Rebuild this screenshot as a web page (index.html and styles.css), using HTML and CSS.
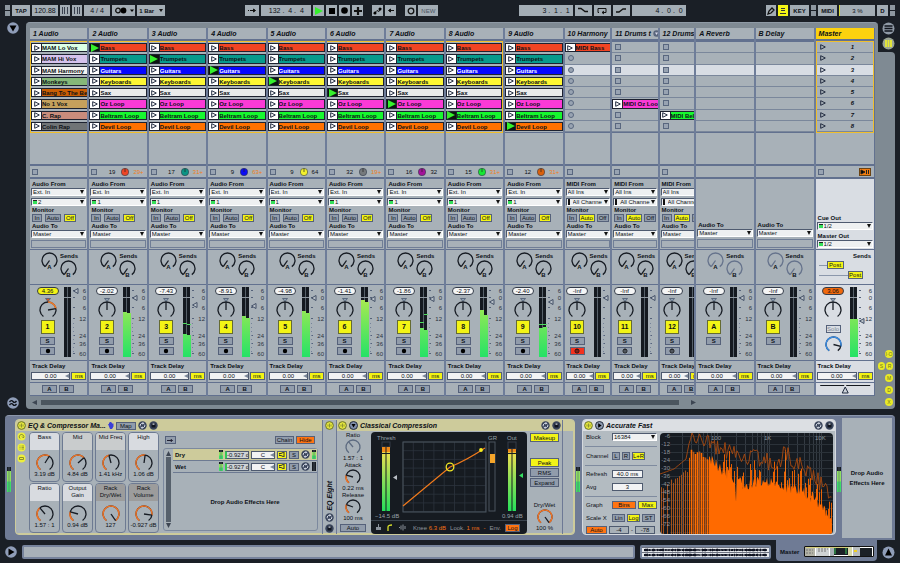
FILE: index.html
```html
<!DOCTYPE html>
<html lang="en">
<head>
<meta charset="utf-8">
<title>Live Set</title>
<link rel="stylesheet" href="styles.css">
</head>
<body>
<header class="toolbar">
  <div class="group">
    <span class="grip"></span>
    <button class="chip b w18">TAP</button>
    <input class="chip w26" aria-label="Tempo" value="120.88">
    <button class="chip w10" aria-label="Nudge down"><svg width="8" height="7"><path d="M1.500 0v7M3.500 0v7M6.500 0v7" stroke="#39414f"/></svg></button>
    <button class="chip w10" aria-label="Nudge up"><svg width="8" height="7"><path d="M1.500 0v7M4.500 0v7M6.500 0v7" stroke="#39414f"/></svg></button>
    <input class="chip w26" aria-label="Time signature" value="4 / 4">
    <button class="chip w23" aria-label="Metronome"><svg width="20" height="7"><circle cx="4" cy="3.5" r="2.3" fill="none" stroke="#111" stroke-width="1.3"/><circle cx="9.500" cy="3.500" r="2.900"/><path d="M16 2.500h4l-2 2.500z"/></svg></button>
    <button class="chip b w28">1 Bar <i class="caret"></i></button>
  </div>
  <div class="group">
    <button class="chip w14" aria-label="Follow"><svg width="9" height="7"><path d="M0 3.500h1M2 3.500h4M5.500 2l2 1.500l-2 1.500z" stroke="#111" fill="#111"/></svg></button>
    <input class="chip w50" aria-label="Position" value="132 .  4 .  4">
    <button class="chip w11" aria-label="Play"><svg width="9" height="8"><path d="M1 0l8 4l-8 4z" fill="#35f02c"/></svg></button>
    <button class="chip w11" aria-label="Stop"><svg width="6" height="6"><path d="M0 0h6v6h-6z"/></svg></button>
    <button class="chip w11" aria-label="Record"><svg width="7" height="7"><circle cx="3.500" cy="3.500" r="3.300"/></svg></button>
    <button class="chip w11" aria-label="Overdub"><svg width="8" height="8"><path d="M4 0v8M0 4h8" stroke="#111" stroke-width="2.200"/></svg></button>
    <span class="space"></span>
    <button class="chip w11" aria-label="Automation arm"><svg width="9" height="8"><path d="M1 6.500l3-3l2 1l2-3" stroke="#111" fill="none"/><circle cx="2" cy="6" r="1.500"/><circle cx="7" cy="2" r="1.500"/></svg></button>
    <button class="chip w11" aria-label="Re-enable automation"><svg width="8" height="7"><path d="M3.500 2l-2 1.500l2 1.500zM3 3.500h4" stroke="#111"/></svg></button>
    <span class="space"></span>
    <button class="chip w11" aria-label="Session record"><svg width="8" height="8"><circle cx="4" cy="4" r="2.800" fill="none" stroke="#111" stroke-width="1.300"/></svg></button>
    <button class="chip dim w20">NEW</button>
  </div>
  <div class="group">
    <input class="chip right w54" aria-label="Loop start" value="3 .  1 .  1">
    <button class="chip w17" aria-label="Punch in"><svg width="10" height="7"><path d="M0 1.500h3l4 3h3" stroke="#111" stroke-width="1.300" fill="none"/></svg></button>
    <button class="chip w17" aria-label="Loop"><svg width="10" height="8"><path d="M2 5.500h-1v-4h8v4h-4M7 4l-2 1.500l2 1.500" stroke="#111" fill="none"/></svg></button>
    <button class="chip w17" aria-label="Punch out"><svg width="10" height="7"><path d="M0 5h3l4-3h3" stroke="#111" stroke-width="1.300" fill="none"/></svg></button>
    <input class="chip right w54" aria-label="Loop length" value="4 .  0 .  0">
  </div>
  <div class="group">
    <button class="chip w10" aria-label="Draw mode"><svg width="8" height="8"><path d="M1 7l1-3l3-3l2 2l-3 3z" fill="none" stroke="#111" stroke-width="1.300"/></svg></button>
    <button class="chip on w10" aria-label="Computer keyboard"><svg width="8" height="8"><path d="M2 1.500h4M2 3.500h4M1 6.500h6" stroke="#333"/></svg></button>
    <button class="chip b w19">KEY</button>
    <span class="grip"></span>
    <button class="chip b w19">MIDI</button>
    <span class="chip load w36">3 %</span>
    <span class="chip b w11">D</span>
    <span class="grip"></span>
  </div>
</header>

<main class="session">
  <aside class="rail">
    <button class="round" aria-label="Show browser"><svg width="12" height="12"><circle cx="6" cy="6" r="5.800" fill="#8f9db8"/><path d="M2.500 3.500h7l-3.500 6z"/></svg></button>
    <button class="round" aria-label="Groove pool"><svg width="12" height="12"><circle cx="6" cy="6" r="5.800" fill="#8f9db8"/><path d="M2.500 5q2-2.500 3.500-.5t3.500-.5M2.500 8q2-2.500 3.500-.5t3.500-.5" fill="none" stroke="#10141c" stroke-width="1.400"/></svg></button>
  </aside>
  <section class="mixer-panel">
    <div class="tracks" id="tracks"></div>
    <div class="scroll"><svg width="6" height="5"><path d="M5 0v5l-5-2.500z" fill="#3d4653"/></svg><div class="thumb"></div><svg width="6" height="5"><path d="M0 0v5l5-2.500z" fill="#3d4653"/></svg></div>
  </section>
  <aside class="side">
    <button class="round" aria-label="Arrangement view"><svg width="13" height="13"><circle cx="6.500" cy="6.500" r="6" fill="#8f9aa6"/><path d="M2.500 4h8M2.500 6.500h8M2.500 9h8" stroke="#10141c" stroke-width="1.400"/></svg></button>
    <button class="round" aria-label="Session view"><svg width="13" height="13"><circle cx="6.500" cy="6.500" r="6" fill="#9aa494"/><path d="M4 3v7M6.500 3v7M9 3v7" stroke="#e8ea30" stroke-width="1.800"/></svg></button>
    <div class="side-body">
      <button class="dot">I·O</button>
      <div class="pair"><button class="dot">S</button><button class="dot">R</button></div>
      <button class="dot">M</button>
      <button class="dot">D</button>
      <button class="dot">X</button>
    </div>
  </aside>
</main>

<section class="devices">
  <span class="lvl" data-lvl="1"></span>
  <section class="rack">
    <div class="rack-main">
      <h2 class="title khaki"><span data-icon="power"></span>EQ &amp; Compressor Ma...<svg class="hand" width="6" height="7"><path d="M0 2l1 0v-1.500h1v-.5h1v.5h1v1h1.500v3l-1.500 2.500h-2z" fill="#3a3fd8"/></svg><button class="btn w20">Map</button><span data-icon="swap"></span><span data-icon="save"></span></h2>
      <div class="rack-body">
        <div class="rack-tabs"><span data-icon="knob"></span><span data-icon="list"></span><span data-icon="dev"></span></div>
        <div class="macros" id="macros"></div>
        <div class="chains">
          <div class="chain-tools"><button class="btn w11" aria-label="Auto select"><svg width="7" height="5"><path d="M0 2.500h4M4 1.500l1.500 1l-1.500 1z" stroke="#223" fill="#223"/></svg></button><span class="grow"></span><button class="btn w19">Chain</button><button class="btn orange w19">Hide</button></div>
          <div class="chain-box">
            <div class="vscroll"><svg width="5" height="5"><path d="M0 5h5l-2.500-5z" fill="#3d4653"/></svg><i></i><svg width="5" height="5"><path d="M0 0h5l-2.500 5z" fill="#3d4653"/></svg></div>
            <div class="chain-list">
              <div id="chainrows"></div>
              <p class="drop">Drop Audio Effects Here</p>
            </div>
          </div>
        </div>
      </div>
    </div>
    <div class="folded"><span class="pw" data-icon="power"></span><h2>EQ Eight</h2><span data-icon="swap"></span><span data-icon="save"></span></div>
    <section class="comp">
      <h2 class="title khaki"><span data-icon="power"></span><span data-icon="down"></span>Classical Compression<span class="grow"></span><span data-icon="swap"></span><span data-icon="save"></span></h2>
      <div class="comp-body">
        <div class="comp-left" id="compleft"></div>
        <div class="display">
          <svg id="compview" width="156" height="88" viewBox="0 0 156 88"></svg>
          <div class="display-row">
            <svg width="36" height="9"><path d="M3 7v-3h2v-3h1v3h2v3z" fill="#8a929b"/><path d="M15 8v-4q0-2 4-2" stroke="#d8e02a" stroke-width="1.300" fill="none"/><path d="M26 4.500h1M28 2.500v4M30 1.500v6M32 3v3" stroke="#8a929b"/></svg>
            <span>Knee <b>6.3 dB</b></span><span>Look. <b>1 ms</b></span><b>-</b><span>Env.</span><button class="btn orange w15">Log</button>
          </div>
        </div>
        <div class="comp-right">
          <button class="btn on">Makeup</button>
          <div class="modes"><button class="btn on">Peak</button><button class="btn">RMS</button><button class="btn">Expand</button></div>
          <div class="dial" data-dial="Dry/Wet|145|100 %"></div>
        </div>
      </div>
    </section>
    <div class="rack-end"></div>
  </section>
  <span class="lvl" data-lvl="1"></span>
  <section class="spec">
    <h2 class="title grey"><span data-icon="power"></span><span data-icon="play"></span>Accurate Fast<span class="grow"></span><span data-icon="swap"></span><span data-icon="save"></span></h2>
    <div class="spec-body">
      <form class="spec-form">
        <div class="frow sep"><label for="blk">Block</label><span class="sel wide"><select id="blk"><option>16384</option></select></span></div>
        <div class="frow sep"><span class="lab">Channel</span><button type="button" class="btn w8">L</button><button type="button" class="btn w8">R</button><button type="button" class="btn on w13">L+R</button></div>
        <div class="frow"><label for="ref">Refresh</label><input id="ref" class="field w31" value="40.0 ms"></div>
        <div class="frow sep"><label for="avg">Avg</label><input id="avg" class="field w31" value="3"></div>
        <div class="frow"><span class="lab">Graph</span><button type="button" class="btn orange w24">Bins</button><button type="button" class="btn on w19">Max</button></div>
        <div class="frow"><span class="lab">Scale X</span><button type="button" class="btn w13">Lin</button><button type="button" class="btn on w13">Log</button><button type="button" class="btn w13">ST</button></div>
        <div class="frow"><button type="button" class="btn orange w21">Auto</button><input class="field flat w20" aria-label="Range top" value="-4"><span>-</span><input class="field flat w20" aria-label="Range bottom" value="-78"></div>
      </form>
      <div class="display"><svg id="specview" width="173" height="101" viewBox="0 0 173 101"></svg></div>
    </div>
  </section>
  <span class="lvl" data-lvl="1"></span>
  <p class="dropzone">Drop Audio<br>Effects Here</p>
</section>

<footer class="status">
  <button class="round" aria-label="Show info view"><svg width="12" height="12"><circle cx="6" cy="6" r="5.800" fill="#8f9db8"/><path d="M3.500 2.500v7l6-3.500z"/></svg></button>
  <div class="info"></div>
  <div class="overview"><svg id="wave" width="127" height="10" viewBox="0 0 127 10"></svg></div>
  <div class="mastertab">Master<svg width="70" height="11" viewBox="0 0 70 11"><rect width="70" height="11" fill="#fff"/><rect x="1" y="1" width="10" height="9" fill="#b3b3a6"/><rect x="12" y="1" width="13" height="9" fill="#cfd3d4"/><rect x="26" y="1" width="4" height="9" fill="#a7afb6"/><rect x="30" y="1" width="14" height="8" fill="#1b2026"/><path d="M31 2v6M42 2v6" stroke="#3cc85a"/><rect x="44" y="1" width="4" height="9" fill="#d8d9a8"/><rect x="49" y="1" width="7" height="9" fill="#b8bdc0"/><rect x="56" y="2" width="12" height="8" fill="#1b2026"/><path d="M2 1.500h42" stroke="#d6cf7c"/><path d="M2 4h7M2 7h7M14 3h10M14 5h9" stroke="#777" stroke-dasharray="2 1"/><path d="M50 5h3" stroke="#f0d020" stroke-width="2"/><path d="M.5.5h69v10h-69z" fill="none" stroke="#111"/></svg></div>
  <button class="round" aria-label="Hide devices"><svg width="13" height="13"><circle cx="6.500" cy="6.500" r="6" fill="#8f9db8"/><path d="M3 9.500h7l-3.500-7z"/></svg></button>
</footer>
<script src="app.js"></script>
</body>
</html>
```

FILE: styles.css
```css
* { box-sizing: border-box; margin: 0; padding: 0; }
:root {
  --line: #62718f;
  --face: #a8b1b8;
  --btn: #919cab;
  --lit: #f3f416;
  --ink: #0c1016;
  --orange: #ff7412;
  --khaki: #cdcb9b;
}
body {
  background: #1a1f26;
  color: var(--ink);
  font: 6px/8px "Liberation Sans", Arial, sans-serif;
  min-height: 100vh;
  overflow: hidden;
}
button, input, select { font: inherit; color: inherit; border: 0; background: none; border-radius: 0; appearance: none; }
button { display: flex; align-items: center; justify-content: center; white-space: nowrap; }
input { text-align: center; min-width: 0; }
svg { display: block; flex: none; }
h2 { font-size: 7px; font-weight: bold; font-style: italic; }
.grow { flex: 1; min-width: 0; }

.w8 { width: 8px; } .w10 { width: 10px; } .w11 { width: 11px; } .w13 { width: 13px; }
.w14 { width: 14px; } .w15 { width: 15px; } .w17 { width: 17px; } .w18 { width: 18px; }
.w19 { width: 19px; } .w20 { width: 20px; } .w21 { width: 21px; } .w23 { width: 23px; }
.w24 { width: 24px; } .w26 { width: 26px; } .w28 { width: 28px; } .w31 { width: 31px; }
.w36 { width: 36px; } .w50 { width: 50px; } .w54 { width: 54px; }

/* transport */
.toolbar { display: flex; justify-content: space-between; padding: 5px 5px 6px; }
.group { display: flex; gap: 2px; }
.chip { height: 11px; background: #a3adb5; font-size: 7px; display: flex; align-items: center; justify-content: center; white-space: pre; flex: none; }
.chip.b { font-weight: bold; font-size: 6px; }
.chip.on { background: var(--lit); }
.chip.dim { color: #4a5462; font-size: 6px; }
.chip.right { text-align: right; padding-right: 3px; }
.load { font-size: 6px; border-left: 1px solid #d8dc40; }
.space { width: 5px; }
.grip { width: 5px; height: 11px; background: linear-gradient(#8d97a0 5px, #1a1f26 5px, #1a1f26 6px, #8d97a0 6px); }
.caret { border: 2px solid transparent; border-top: 3px solid #111; border-bottom: 0; margin-left: 3px; }

/* session view */
.session { display: flex; margin-right: 5px; }
.rail { width: 26px; padding: 0 5px 0; display: flex; flex-direction: column; justify-content: space-between; }
.mixer-panel { flex: 1; min-width: 0; background: #7f8a93; border-radius: 4px 4px 0 4px; border-top: 1px solid #8f9aa5; padding: 5px 3px 0 4px; }
.side { width: 17px; display: flex; flex-direction: column; align-items: flex-end; }
.side .round { margin: 0 0 2px; }
.side-body { flex: 1; align-self: stretch; background: #7f8a93; border-radius: 0 4px 4px 0; display: flex; flex-direction: column; align-items: flex-end; justify-content: flex-end; gap: 4px; padding: 0 2px 3px 0; }
.dot { width: 8px; height: 8px; border-radius: 4px; background: #e9ea26; color: #6f7423; font-size: 5px; }
.pair { display: flex; gap: 1px; }
.pair .dot { width: 7px; }

.tracks { display: grid; grid-template-columns: repeat(9, minmax(0, 594fr)) minmax(0, 476fr) minmax(0, 474fr) minmax(0, 366fr) minmax(0, 594fr) minmax(0, 600fr) minmax(0, 594fr); }
.track { --in: 5px; display: grid; grid-template-columns: max(100%, 46px); grid-template-rows: 13px 92px 33px 13px 71px 35px 76px 22px 13px; background: var(--face); border-right: 2px solid #6e7d99; overflow: hidden; }
.track.narrow { --in: 0px; }
.track.master { border-right: 1px solid var(--line); }
.track > * { border-bottom: 1px solid var(--line); min-width: 0; }
.track .spare, .track .st { border-bottom-width: 2px; }
.track > h2 { line-height: 11px; padding-left: 3px; white-space: nowrap; overflow: hidden; border-bottom-width: 2px; display: flex; align-items: center; }
.track > h2 svg { margin-left: 2px; }
.master > h2 { background: #fcd20e; }

.clips { display: grid; grid-template-rows: repeat(8, 1fr); }
.track .clips { border-top: 1px solid var(--line); }
.track.sel-area .clips, .track.master .clips { border-top: 1px solid #f0bf2c; border-bottom: 1px solid #f0bf2c; }
.sel-first .clips { border-left: 1px solid #f0bf2c; }
.sel-last .clips { border-right: 1px solid #f0bf2c; }
.master .clips { border-left: 1px solid #f0bf2c; border-right: 1px solid #f0bf2c; }
.slot { display: flex; align-items: center; border-bottom: 1px solid #7a879b; padding-left: 3px; min-height: 0; }
.slot.cur { background: #d8dde4; }
.slot.full { padding: 1px 0; border-bottom: 0; }
.launch { width: 10px; align-self: stretch; background: #fff; border: 1px solid #1d2230; border-right: 0; flex: none; }
.launch.live { background: #0c1410; }
.clip { flex: 1; min-width: 0; align-self: stretch; border: 1px solid #1d2230; font-weight: bold; display: block; text-align: left; line-height: 8px; overflow: hidden; padding-left: 0; }
.scene { flex: 1; text-align: center; font-weight: bold; font-style: italic; padding-left: 6px; }
.stop { width: 6px; height: 6px; border: 1px solid #59677f; background: #98a3b2; flex: none; }
.stop.rnd { border-radius: 3px; }

.st { display: flex; align-items: center; padding: 0 3px 0 2px; }
.st .n { width: 18px; text-align: right; margin-right: 6px; }
.st .m { margin-left: 4px; color: #f07f22; }
.st .m.k { color: var(--ink); }
.st .back { margin-left: auto; width: 12px; height: 8px; background: #f07c12; border: 1px solid #6b4313; }

.io { display: flex; flex-direction: column; gap: 1px; padding: 2px 1px 1px 1px; }
.io.end { justify-content: flex-end; }
.io b, .delay b { line-height: 6px; padding-left: 1px; white-space: nowrap; }
.sel { position: relative; display: flex; height: 8px; background: #eef0f1; border: 1px solid #4e5a6f; border-right-color: #fff; border-bottom-color: #fff; overflow: hidden; flex: none; }
.sel.wide { flex: 1; min-width: 0; }
.io .two { margin: 1px 0 0; }
.sel select { width: 100%; line-height: 6px; height: 6px; padding-left: 1px; }
.sel::after { content: ""; position: absolute; right: 1px; top: 1px; border: 2px solid transparent; border-top: 4px solid #111; border-bottom: 0; }
.sel .led { width: 4px; height: 4px; margin: 1px 0 0 1px; background: #35e05a; border-top: 1px solid #222; flex: none; }
.sel .led.midi { width: 2px; height: 6px; margin: 0 2px 0 1px; background: #111; }
.mon { display: flex; gap: 3px; padding-left: 1px; }
.btn { height: 8px; background: var(--btn); border: 1px solid #55617a; line-height: 6px; flex: none; }
.btn.on { background: var(--lit); }
.btn.orange { background: var(--orange); }
.mon .btn:nth-child(1) { width: 10px; } .mon .btn:nth-child(2) { width: 16px; } .mon .btn:nth-child(3) { width: 12px; }
.narrow .mon { gap: 2px; }
.void { height: 9px; border: 1px solid #707e96; margin-top: 1px; }
.master .io, .master .sends, .master .mix, .master .delay, .master .xf { background: #d9dde3; }
.master .io .sel:not(:last-child) { margin-bottom: 2px; }

.sends { display: flex; padding: 2px 0 0 calc(var(--in) + 6px); }
.sends > div { margin-left: 2px; }
.sends b { display: block; line-height: 8px; margin-bottom: 1px; }
.sends .kb { margin-left: 0; margin-top: -1px; }
.master .sends { padding: 2px 3px 0 1px; }
.prow { display: flex; flex-direction: column; flex: 1; gap: 1px; }
.prow > div { display: flex; align-items: center; }
.prow > .cap { justify-content: flex-end; }
.prow b { line-height: 8px; margin: 0; }
.prow .last { margin-top: 1px; }
.wire { height: 1px; background: #8b97ab; width: 8px; flex: none; }
.wire.long { width: 29px; }

.mix { display: flex; padding: 2px 0 0 calc(var(--in) + 2px); overflow: hidden; }
.strip { width: 21px; display: flex; flex-direction: column; align-items: center; flex: none; margin-right: 6px; }
.pill { width: 22px; height: 8px; border-radius: 4px; background: #f4f5f5; border: 1px solid #333b49; line-height: 6px; text-align: center; flex: none; }
.pill.hot { background: var(--lit); }
.pill.over { background: #f0680c; }
.mark { margin: 3px 0 -1px; }
.actv { width: 14px; height: 14px; background: var(--lit); border: 1px solid #656b32; font-weight: bold; font-size: 7px; margin: 1px 0 3px; flex: none; }
.strip .btn { width: 15px; font-weight: bold; }
.strip .btn + .btn { margin-top: 2px; }
.btn.arm { background: #f3321e; }
.strip .solo { font-weight: normal; color: #7d8796; background: #d9dde3; margin: 6px 0 3px; }

.delay { padding: 2px 1px 0; }
.delay b { display: block; margin-bottom: 3px; }
.drow { display: flex; gap: 1px; }
.field { height: 8px; background: #f2f3f4; border: 1px solid #4e5a6f; line-height: 6px; flex: none; }
.field.flat { background: #a8b1b8; }
.dfield { position: relative; flex: 1; min-width: 0; display: flex; }
.dfield.fix { flex: none; }
.dfield .field { width: 100%; }
.dfield::after { content: ""; position: absolute; right: 1px; top: 2px; border: 2px solid transparent; border-right: 4px solid #7b8799; border-left: 0; }
.xf { display: flex; gap: 2px; padding: 2px 0 0 calc(var(--in) + 7px); }
.xf .btn { width: 15px; font-weight: bold; }
.master .xf { padding: 1px 3px; }

.scroll { display: flex; align-items: center; gap: 3px; padding: 4px 178px 4px 2px; }
.thumb { flex: 1; height: 5px; background: #4b555f; margin-right: 9px; }

/* device view */
.devices { display: flex; margin: 6px 5px 0; padding: 3px 3px 3px 2px; background: #6f7b95; border-radius: 4px 4px 0 4px; border-top: 1px solid #8b96ab; height: 125px; }
.lvl { width: 4px; align-self: center; margin: 0 1px 0 0; padding-top: 2px; flex: none; }
.rack { display: flex; width: 560px; background: var(--face); border: 1px solid var(--khaki); border-radius: 4px; overflow: hidden; margin: 0 1px 2px 3px; flex: none; box-shadow: inset -1px -1px 0 var(--khaki); }
.title { display: flex; align-items: center; gap: 2px; height: 11px; white-space: nowrap; padding: 0 1px; }
.khaki { background: var(--khaki); }
.grey { background: #dcdfe3; }
.title .btn { font-weight: normal; font-style: normal; font-size: 6px; }
.rack-main { width: 307px; border-right: 1px solid #6d7995; flex: none; }
.rack-body { display: flex; padding-top: 1px; }
.rack-tabs { width: 13px; display: flex; flex-direction: column; gap: 2px; padding-left: 1px; }
.macros { width: 130px; display: grid; grid-template-columns: repeat(4, 1fr); gap: 1px 2px; }
.macro { height: 50px; border: 1px solid #6d7a92; border-radius: 4px; overflow: hidden; text-align: center; }
.macro .nm { height: 17px; line-height: 7px; padding-top: 1px; background: #d8dbe0; display: block; white-space: nowrap; }
.macro .nm.c1 { background: #c9cccd; } .macro .nm.c2 { background: #9c9c9c; }
.macro svg { margin: 4px auto 0; }
.macro .v { display: block; margin-top: -1px; white-space: nowrap; line-height: 6px; }
.chains { flex: 1; margin-left: 4px; padding: 4px 4px 0 0; min-width: 0; }
.chain-tools { display: flex; gap: 2px; padding: 0 3px 0 2px; margin-bottom: 4px; }
.chain-box { display: flex; height: 83px; border: 1px solid #7c899e; border-radius: 3px; }
.vscroll { width: 9px; display: flex; flex-direction: column; align-items: center; padding: 2px 0; gap: 1px; }
.vscroll i { flex: 1; width: 5px; background: #56606b; }
.chain-list { flex: 1; min-width: 0; display: flex; flex-direction: column; }
.crow { display: flex; align-items: center; gap: 2px; height: 12px; border-bottom: 1px solid #6d7a92; padding: 0 1px 0 2px; font-weight: bold; }
.crow.cur { background: var(--khaki); }
.crow .btn, .crow .field { font-weight: normal; }
.crow .btn { width: 10px; }
.crow .field { width: 24px; }
.crow .field.vol { border-left: 2px solid #35c855; background: #ced3d6; }
.drop { margin: auto; font-weight: bold; }
.folded { width: 14px; display: flex; flex-direction: column; align-items: center; justify-content: flex-end; gap: 2px; border-right: 1px solid #6d7995; padding: 1px 0; flex: none; }
.folded .pw { margin-bottom: auto; }
.folded h2 { writing-mode: vertical-rl; transform: rotate(180deg); line-height: 8px; }
.comp { flex: 1; min-width: 0; border-right: 1px solid #6d7995; }
.comp-body { display: flex; gap: 3px; padding: 1px 3px 0 1px; }
.comp-left { width: 30px; display: flex; flex-direction: column; align-items: center; }
.comp-left .btn { width: 26px; margin-top: 2px; }
.dial { display: flex; flex-direction: column; align-items: center; line-height: 7px; white-space: nowrap; }
.display { background: #161b21; border-radius: 4px; overflow: hidden; flex: none; }
.display-row { display: flex; align-items: center; gap: 4px; height: 14px; border-top: 1px solid #39424c; color: #8f979f; padding-left: 2px; white-space: nowrap; }
.display-row b { color: #f07018; font-weight: normal; }
.display-row .btn { color: var(--ink); }
.comp-right { flex: 1; display: flex; flex-direction: column; padding-top: 1px; align-items: stretch; }
.comp-right > .btn, .modes .btn { align-self: stretch; height: 9px; }
.modes { display: flex; flex-direction: column; gap: 1px; margin: 16px 0 15px; }
.rack-end { width: 11px; background: linear-gradient(var(--khaki) 11px, transparent 11px); flex: none; }
.spec { width: 254px; background: #b3bbc1; border: 1px solid #d5d9de; border-radius: 4px; overflow: hidden; margin: 0 1px 2px 1px; flex: none; }
.spec-body { display: flex; gap: 3px; padding: 2px; }
.spec-form { flex: 1; min-width: 0; display: flex; flex-direction: column; justify-content: space-between; }
.frow { display: flex; gap: 2px; align-items: center; padding-left: 1px; }
.frow.sep { border-bottom: 1px solid #7f8b9f; padding-bottom: 5px; }
.frow label, .frow .lab { width: 24px; flex: none; }
.dropzone { flex: 1; margin: -1px 0 -1px 0; background: #a8b1b8; font-weight: bold; text-align: center; line-height: 10px; display: flex; align-items: center; justify-content: center; }

/* footer */
.status { display: flex; align-items: center; gap: 5px; padding: 0 5px; height: 24px; }
.info { flex: 1; height: 14px; background: #a8b1b8; border: 2px solid #76839b; border-radius: 2px; }
.overview { width: 131px; height: 14px; background: #a8b1b8; border: 2px solid #76839b; border-radius: 2px; display: flex; align-items: center; justify-content: center; overflow: hidden; }
.mastertab { width: 101px; height: 21px; margin-top: -3px; background: #6f7b95; border-radius: 0 0 4px 4px; display: flex; align-items: center; justify-content: space-between; padding: 2px 3px 0 4px; font-weight: bold; }
```

FILE: app.js
```js
(() => {
const $ = (id) => document.getElementById(id);

function arc(c, r, from, to) {
  const p = (a) => [c + r * Math.sin(a * Math.PI / 180), c - r * Math.cos(a * Math.PI / 180)].map((n) => n.toFixed(2)).join(' ');
  return `M${p(from)}A${r} ${r} 0 ${to - from > 180 ? 1 : 0} 1 ${p(to)}`;
}
function knob({ a = 0, from = 0, color = '', size = 17, letter = '', ring = '#171c24' }) {
  const c = size / 2, r = c - 1;
  const x = c + r * Math.sin(a * Math.PI / 180), y = c - r * Math.cos(a * Math.PI / 180);
  return `<svg width="${size}" height="${size}">
    <path d="${arc(c, r, -145, 145)}" fill="none" stroke="${ring}" stroke-width="1.3"/>
    ${color && a > from ? `<path d="${arc(c, r, from, a)}" fill="none" stroke="${color}" stroke-width="1.5"/>` : ''}
    <path d="M${c} ${c}L${x.toFixed(2)} ${y.toFixed(2)}" stroke="${ring}" stroke-width="1.3"/>
    ${letter ? `<text x="${c}" y="${size}" font-size="6" font-weight="bold" text-anchor="middle" fill="#0c1016">${letter}</text>` : ''}</svg>`;
}

const icons = {
  power: '<circle cx="4.500" cy="4.500" r="3.900" fill="#e4e63c" stroke="#6c7230"/><path d="M4.500 2.500v4M3 3.500v2M6 3.500v2" stroke="#7b8030" stroke-width=".8"/>',
  swap: '<circle cx="4.500" cy="4.500" r="4.200" fill="#39445a"/><path d="M2.300 5.300a2.300 2.300 0 0 1 2.700-3M6.700 3.700a2.300 2.300 0 0 1-2.700 3" stroke="#d5dbe6" fill="none"/><path d="M4.500 1l2 1.300l-2 1.500zM4.500 5.200l-2 1.500l2 1.300z" fill="#d5dbe6"/>',
  save: '<circle cx="4.500" cy="4.500" r="4.200" fill="#39445a"/><path d="M2.500 2.500h4v4h-4z" fill="#10151f"/><path d="M3.500 2.500h2v1.200h-2z" fill="#d5dbe6"/>',
  down: '<circle cx="4.500" cy="4.500" r="4" fill="#7e8ca8" stroke="#222a3a"/><path d="M2.500 3h4l-2 3.500z"/>',
  play: '<circle cx="4.500" cy="4.500" r="4" fill="#8e9ab0" stroke="#222a3a"/><path d="M3.200 2.300v4.400l3.500-2.200z"/>',
  knob: '<circle cx="4.500" cy="4.500" r="4" fill="#ecee3c"/><path d="M3 6.500a2.300 2.300 0 1 1 3.500-.5l-1.500-1.500" fill="none" stroke="#8a8f2e"/>',
  list: '<circle cx="4.500" cy="4.500" r="4" fill="#ecee3c"/><path d="M2.500 3h1M4.500 3h2.500M2.500 4.500h1M4.500 4.500h2.500M2.500 6h1M4.500 6h2.500" stroke="#8a8f2e" stroke-width=".8"/>',
  dev: '<circle cx="4.500" cy="4.500" r="4" fill="#ecee3c"/><path d="M2.500 3.500h4v2h-4z" fill="none" stroke="#8a8f2e"/>'
};
const icon = (n) => `<svg width="9" height="9">${icons[n]}</svg>`;
document.querySelectorAll('[data-icon]').forEach((e) => { e.innerHTML = icon(e.dataset.icon); });

const smallLevel = (h, y, on = true) => `<svg width="4" height="${h}"><rect width="4" height="${h}" fill="#161b22"/>${on ? `<rect y="${y}" width="4" height="${h - y}" fill="#3ddd68"/><rect y="${y}" width="4" height="${(h - y) / 2}" fill="#8ee060"/>` : ''}<path d="M2 0v${h}" stroke="#5b6a70" stroke-width=".6"/></svg>`;
document.querySelectorAll('[data-lvl]').forEach((e) => { e.innerHTML = smallLevel(25, 4); });

const scenes = [
  ['Bass', '#f04423'], ['Trumpets', '#089a8c'], ['Guitars', '#0606ff', '#fff'], ['Keyboards', '#fdf733'],
  ['Sax', '#e9ebeb'], ['Oz Loop', '#fb3ad6'], ['Beltram Loop', '#16f82f'], ['Devil Loop', '#ff7100']
];
const vocals = [
  ['MAM Lo Vox', '#dcffe6'], ['MAM Hi Vox', '#d5c3ec'], ['MAM Harmony', '#f4f4f0'], ['Monkeys', '#86b878'],
  ['Bang To The Be', '#c95d04'], ['No 1 Vox', '#c5a05c'], ['C. Rap', '#c98c7c'], ['Colin Rap', '#707476']
];
const only = (i, c) => scenes.map((_, k) => (k === i ? c : null));
const tracks = [
  { name: '1 Audio', no: '1', clips: vocals, input: '2', vol: '4.36', hot: 1, pan: 80, fader: 4 },
  { name: '2 Audio', no: '2', live: 0, stat: ['19', '#ee4526', '29+'], vol: '-2.02', lv: [25, 26], fader: 11 },
  { name: '3 Audio', no: '3', live: 1, stat: ['17', '#0b9484', '31+'], vol: '-7.43', lv: [47, 48], pk: [36, 37], fader: 18 },
  { name: '4 Audio', no: '4', live: 2, stat: ['9', '#0b0bf5', '63+'], vol: '-8.91', lv: [29, 31], fader: 19 },
  { name: '5 Audio', no: '5', live: 3, stat: ['9', '#f3f02c', '64'], vol: '-4.98', lv: [24, 26], fader: 11 },
  { name: '6 Audio', no: '6', live: 4, stat: ['32', '#75797c', '19+'], vol: '-1.41', lv: [13, 15], fader: 12 },
  { name: '7 Audio', no: '7', live: 5, stat: ['16', '#a3129a', '32'], vol: '-1.86', lv: [41, 43], pk: [35, 27], fader: 12 },
  { name: '8 Audio', no: '8', live: 6, stat: ['15', '#16e832', '31+'], vol: '-2.37', lv: [23, 28], fader: 15 },
  { name: '9 Audio', no: '9', live: 7, stat: ['12', '#d9600c', '31+'], vol: '-2.40', lv: [41, 40], pk: [37, 37], fader: 15 },
  { name: '10 Harmony', no: '10', midi: 1, clips: only(0, ['MIDI Bass', '#f04423']), rnd: 1, arm: 1 },
  { name: '11 Drums t', no: '11', midi: 1, clips: only(5, ['MIDI Oz Loo', '#fb3ad6']), fold: 1 },
  { name: '12 Drums', no: '12', midi: 1, clips: only(6, ['MIDI Bel', '#16f82f']) },
  { name: 'A Reverb', no: 'A', ret: 1 },
  { name: 'B Delay', no: 'B', ret: 1 },
  { name: 'Master', master: 1, vol: '3.06', lv: [32, 32], fader: 34 }
];

const tri = '<svg width="6" height="6"><path d="M.7.7v4.600l4.600-2.300z" fill="none" stroke="#222c40"/></svg>';
const triLive = '<svg width="8" height="8"><path d="M0 0v8l8-4z" fill="#35f02c"/></svg>';
const sel = (label, text, led = '', cls = '') => `<span class="sel ${cls}">${led}<select aria-label="${label}"><option>${text}</option></select></span>`;

function slots(t) {
  return scenes.map((s, i) => {
    const cur = i === 2 ? ' cur' : '';
    if (t.master) return `<div class="slot${cur}">${tri}<span class="scene">${i + 1}</span></div>`;
    if (t.ret) return `<div class="slot${cur}"></div>`;
    const c = t.clips ? t.clips[i] : s;
    if (!c) return `<div class="slot${cur}"><button class="stop${t.rnd ? ' rnd' : ''}" aria-label="Stop"></button></div>`;
    const live = t.live === i;
    return `<div class="slot full"><button class="launch${live ? ' live' : ''}" aria-label="Launch">${live ? triLive : tri}</button><button class="clip" style="background:${c[1]};color:${c[2] || '#0c1016'}">${c[0]}</button></div>`;
  }).join('');
}
function status(t) {
  if (t.ret) return '';
  const stop = '<button class="stop" aria-label="Stop clips"></button>';
  if (t.master) return stop + '<button class="back" aria-label="Back to arrangement"><svg width="10" height="6"><path d="M1 1v4l4-2zM6.500 1v4M8.500 1v4" stroke="#222"/></svg></button>';
  if (!t.stat) return stop;
  const [n, col, m] = t.stat;
  return `${stop}<span class="n">${n}</span><svg width="8" height="8"><circle cx="4" cy="4" r="3.700" fill="${col}" stroke="#333c4c" stroke-width=".6"/><path d="M4 4V.5" stroke="#222" stroke-width=".7"/></svg><span class="m${m.endsWith('+') ? '' : ' k'}">${m}</span>`;
}
function io(t) {
  const led = '<i class="led"></i>';
  if (t.master) return `<div class="io end"><b>Cue Out</b>${sel('Cue Out', '1/2', led)}<b>Master Out</b>${sel('Master Out', '1/2', led)}</div>`;
  const to = `<b>Audio To</b>${sel('Audio To', 'Master')}<div class="void"></div>`;
  if (t.ret) return `<div class="io end">${to}</div>`;
  const on = t.midi ? 1 : 2;
  return `<div class="io"><b>${t.midi ? 'MIDI' : 'Audio'} From</b>${sel('Input type', t.midi ? 'All Ins' : 'Ext. In')}${sel('Input channel', t.midi ? 'All Channe' : t.input || '1', t.midi ? '<i class="led midi"></i>' : led, 'two')}
    <b>Monitor</b><div class="mon">${['In', 'Auto', 'Off'].map((x, i) => `<button class="btn${i === on ? ' on' : ''}">${x}</button>`).join('')}</div>${to}</div>`;
}
function sends(t) {
  if (t.master) return '<div class="sends"><div class="prow"><div class="cap"><b>Sends</b></div><div><i class="wire"></i><button class="btn on w17">Post</button></div><div class="last"><i class="wire long"></i><button class="btn on w15">Post</button></div></div></div>';
  const ring = t.ret ? '#66738c' : undefined;
  return `<div class="sends">${knob({ a: -145, letter: 'A', ring })}<div><b>Sends</b><div class="kb">${knob({ a: -145, letter: 'B', ring })}</div></div></div>`;
}
function meter(t) {
  const w = t.midi ? 16 : 24, lv = t.lv || [70, 70];
  const marks = [[6, 3], [0, 10], [6, 20], [12, 31], [24, 48], [36, 56], [60, 66]];
  let s = `<svg width="${w}" height="72"><defs><linearGradient id="g" x1="0" y1="0" x2="0" y2="70" gradientUnits="userSpaceOnUse"><stop offset=".1" stop-color="#b5ea50"/><stop offset="1" stop-color="#25e266"/></linearGradient></defs>
    <rect width="3" height="70" fill="#141920"/><rect x="4" width="3" height="70" fill="#141920"/><path d="M3.500 0v70" stroke="#566069"/>`;
  lv.forEach((y, i) => {
    s += `<rect x="${i * 4}" y="${y}" width="4" height="${70 - y}" fill="url(#g)"/>`;
    if (t.pk) s += `<rect x="${i * 4}" y="${t.pk[i]}" width="4" height="1" fill="#4fdc60"/>`;
  });
  s += '<path d="M0 10.500h7" stroke="#8d969f"/>';
  marks.forEach(([n, y]) => {
    s += `<path d="M9 ${y + 0.5}h2" stroke="#55627a"/>`;
    if (!t.midi) s += `<text x="22" y="${y + 3}" font-size="6" text-anchor="end" fill="#28303d">${n}</text>`;
  });
  for (let y = 36; y < 68; y += 4) s += `<path d="M9 ${y + 0.5}h1" stroke="#75829a"/>`;
  const f = t.fader === undefined ? 11 : t.fader;
  return s + `<path d="M14 ${f - 2.5}v5l-4.500-2.500z" fill="#b8c0c8" stroke="#39465e" stroke-width=".9"/></svg>`;
}
function mix(t) {
  const pill = `<output class="pill${t.hot ? ' hot' : ''}${t.master ? ' over' : ''}">${t.vol || '-Inf'}</output>`;
  const mark = `<svg class="mark" width="6" height="4"><path d="M.5.5h5l-2.500 3z" fill="${t.hot ? '#d9541a' : '#8fa0b0'}" stroke="#4c5a72" stroke-width=".8"/></svg>`;
  const pan = knob({ a: t.pan || 0, from: 0, color: '#f07a28', size: 18 });
  let tail;
  if (t.master) tail = `<button class="btn solo">Solo</button>${knob({ a: 105, from: -145, color: '#3b8be0', size: 17 })}`;
  else {
    const rec = t.midi ? '<svg width="6" height="6"><circle cx="3" cy="3" r="2" fill="none" stroke="#111"/><path d="M3 1v3" stroke="#111"/></svg>' : '<svg width="6" height="6"><circle cx="3" cy="3" r="2.200"/></svg>';
    tail = `<button class="actv">${t.no}</button><button class="btn">S</button>${t.ret ? '' : `<button class="btn${t.arm ? ' arm' : ''}" aria-label="Arm">${rec}</button>`}`;
  }
  return `<div class="mix"><div class="strip">${pill}${mark}${pan}${tail}</div>${meter(t)}</div>`;
}
$('tracks').innerHTML = tracks.map((t, i) => {
  const cls = ['track', t.midi && 'narrow', t.ret && 'ret', t.master && 'master', i < 8 && 'sel-area', i === 0 && 'sel-first', i === 7 && 'sel-last'].filter(Boolean).join(' ');
  const fold = t.fold ? '<svg width="7" height="7"><circle cx="3.500" cy="3.500" r="3.200" fill="#5a667c"/><path d="M2 2.500h3l-1.500 2.500z" fill="#dde"/></svg>' : '';
  const xf = t.master ? '<svg width="100%" height="10" viewBox="0 0 52 10"><path d="M1 1.500h24M27 1.500h24" stroke="#14181f"/><path d="M26 3l3 6h-6z" fill="#cdd3da" stroke="#222c40"/></svg>' : '<button class="btn">A</button><button class="btn">B</button>';
  return `<section class="${cls}"><h2>${t.name}${fold}</h2><div class="clips">${slots(t)}</div><div class="spare"></div><div class="st">${status(t)}</div>${io(t)}${sends(t)}${mix(t)}
    <div class="delay"><b>Track Delay</b><div class="drow"><span class="dfield"><input class="field" aria-label="Track Delay" value="0.00"></span><button class="btn on w15">ms</button></div></div><div class="xf">${xf}</div></section>`;
}).join('');

const macros = [
  ['Bass', '', 32, '3.19 dB'], ['Mid', 'c1', 48, '4.84 dB'], ['Mid Freq', 'c1', -15, '1.41 kHz'], ['High', '', 8, '1.06 dB'],
  ['Ratio', '', -40, '1.57 : 1'], ['Output<br>Gain', '', -75, '0.94 dB'], ['Rack<br>Dry/Wet', 'c2', 145, '127'], ['Rack<br>Volume', 'c2', 98, '-0.927 dB']
];
$('macros').innerHTML = macros.map(([n, c, a, v]) => `<div class="macro"><span class="nm ${c}">${n}</span>${knob({ a, from: -145, color: '#ee7428', size: 18 })}<span class="v">${v}</span></div>`).join('');

$('chainrows').innerHTML = ['Dry', 'Wet'].map((n, i) => `<div class="crow${i ? '' : ' cur'}">${n}<span class="grow"></span>${smallLevel(9, 2)}<input class="field vol" aria-label="${n} volume" value="-0.927 d"><span class="dfield fix"><input class="field" aria-label="${n} pan" value="C"></span><button class="btn on" aria-label="Activate"><svg width="6" height="5"><path d="M0 1.500h2l3-1.500v5l-3-1.500h-2z" fill="none" stroke="#333"/></svg></button><button class="btn">S</button>${icon('swap')}${smallLevel(9, 2, !i)}</div>`).join('');

const dial = (label, a, v, from = -145, color = '#ee7428', ring) => `<div class="dial"><span>${label}</span>${knob({ a, from, color, size: 16, ring })}<span>${v}</span></div>`;
$('compleft').innerHTML = dial('Ratio', -40, '1.57 : 1', -145, '', '#5d6b80') + dial('Attack', -75, '0.22 ms') + dial('Release', -70, '100 ms') + '<button class="btn">Auto</button>';
document.querySelectorAll('[data-dial]').forEach((e) => {
  const [l, a, v] = e.dataset.dial.split('|');
  e.outerHTML = dial(l, +a, v);
});

let cv = '<defs><linearGradient id="lv" x1="0" y1="0" x2="0" y2="1"><stop offset="0" stop-color="#f0a020"/><stop offset=".1" stop-color="#e8e050"/><stop offset=".5" stop-color="#8be058"/><stop offset="1" stop-color="#25e05a"/></linearGradient></defs>';
for (let i = 0; i <= 8; i++) cv += `<path d="M${32 + i * 10.3} 10v70M32 ${10 + i * 8.7}h83" stroke="#2c343d" stroke-width=".8"/>`;
cv += `<rect x="32" y="10" width="83" height="70" fill="none" stroke="#4a545f"/>
<rect x="11" y="10" width="8" height="5" fill="none" stroke="#343d48"/><rect x="11" y="15" width="8" height="64" fill="url(#lv)"/><rect x="11" y="15" width="8" height="5" fill="#f08a18"/><path d="M15 15v64M11 21.500h8" stroke="#161b21"/>
<rect x="118" y="10" width="6" height="69" fill="none" stroke="#4a545f"/><rect x="119" y="22" width="5" height="9" fill="#f5a52a"/>
<rect x="137" y="10" width="8" height="7" fill="none" stroke="#343d48"/><rect x="137" y="17" width="8" height="62" fill="url(#lv)"/><rect x="137" y="17" width="8" height="3" fill="#f08a18"/><path d="M141 17v62M137 21.500h8" stroke="#161b21"/>
<path d="M32 74L79 35Q96 28 114 16" fill="none" stroke="#f07a1c" stroke-width="1.2"/><circle cx="79" cy="35" r="3.800" fill="none" stroke="#f0e824" stroke-width="1.300"/><circle cx="110" cy="18" r="1.900" fill="#f6ee1e"/>
<path d="M26 43v5l-4-2.500z" fill="#b9bfc6"/><path d="M152 41v5l-4-2.500z" fill="#35e060"/>
<g font-size="6" fill="#9aa2aa"><text x="6" y="8">Thresh</text><text x="117" y="8">GR</text><text x="136" y="8">Out</text><text x="4" y="86">−14.5 dB</text><text x="131" y="86">0.94 dB</text></g>`;
$('compview').innerHTML = cv;

/* spectrum: log-frequency bins below, held maximum above */
let seed = 11;
const rnd = () => (seed = (seed * 16807) % 2147483647) / 2147483647;
function env(points, x) {
  for (let i = 1; i < points.length; i++) {
    if (x <= points[i][0]) {
      const [x0, y0] = points[i - 1], [x1, y1] = points[i];
      return y0 + (y1 - y0) * (x - x0) / (x1 - x0);
    }
  }
  return points[points.length - 1][1];
}
let sv = '';
[22, 31, 38, 43, 47, 51, 54, 57, 76, 85, 92, 97, 101, 104, 107, 109, 128, 137, 144, 149, 153, 156, 159, 161].forEach((x) => { sv += `<path d="M${x}.5 0v101" stroke="#343b43"/>`; });
for (let y = 3; y < 101; y += 8) sv += `<path d="M10 ${y}.5h163" stroke="#2b3239"/>`;
const floor = [[0, 55], [14, 44], [28, 34], [30, 14], [44, 20], [48, 24], [60, 34], [76, 45], [84, 50], [110, 48], [132, 54], [146, 59], [156, 66], [172, 86]];
for (let x = 1; x < 50; x += 2) {
  if (x > 1 && x < 12 && x % 4 === 1) continue;
  const y = env(floor, x) + rnd() * 6;
  sv += `<path d="M${x}.5 101V${y.toFixed(1)}" stroke="${x > 28 && x % 3 ? '#ff6c00' : '#b5581a'}" stroke-width="${x > 30 ? 1.6 : 0.9}"/>`;
}
let bins = 'M49 101', spikes = '';
for (let x = 49; x <= 172; x++) {
  const r = rnd();
  let y = env(floor, x) + (r - 0.4) * 12;
  if (x === 76) y = 69;
  bins += `L${x} ${y.toFixed(1)}`;
  if (x > 62 && rnd() > 0.68) spikes += `M${x}.5 ${(y + 4).toFixed(1)}v${(-10 - rnd() * 14).toFixed(1)}`;
}
sv += `<path d="${spikes}" stroke="#ff6a00" stroke-width=".9"/><path d="M125.500 60V17" stroke="#e8741c"/><path d="${bins}V101z" fill="#ff6a00"/>`;
const hold = [[0, 41], [14, 36], [26, 26], [30, 6], [32, 0], [36, 12], [39, 0], [44, 12], [48, 2], [52, 14], [66, 18], [78, 22], [100, 26], [118, 32], [125, 18], [132, 28], [145, 34], [156, 44], [172, 66]];
let line = 'M0 41';
for (let x = 2; x <= 172; x += 1.5) {
  const j = x < 28 ? 0 : x < 50 ? 4 : 17;
  line += `L${x} ${Math.max(0, env(hold, x) + (rnd() - 0.5) * j).toFixed(1)}`;
}
sv += `<path d="${line}" fill="none" stroke="#a84a10" stroke-width=".9"/><g font-size="6" fill="#8d949b">`;
for (let i = 0; i < 12; i++) sv += `<text x="10" y="${5 + i * 8}" text-anchor="end">${-6 * (i + 1)}</text>`;
sv += '<text x="51" y="7">100</text><text x="104" y="7">1K</text><text x="155" y="7">10K</text></g>';
$('specview').innerHTML = sv;

let wv = '';
for (let x = 2; x < 125; x++) {
  const a = 1 + rnd() * 1.8;
  wv += `<path d="M${x}.5 ${(3 - a / 2).toFixed(1)}v${a.toFixed(1)}M${x}.5 ${(8 - a / 2).toFixed(1)}v${a.toFixed(1)}" stroke="#0e1220"/>`;
}
$('wave').innerHTML = `<rect width="127" height="10" fill="#e6e9ed"/>${wv}<path d="M0 .5h127M0 5.500h127" stroke="#3a4152" stroke-width=".7"/>`;
})();
```
